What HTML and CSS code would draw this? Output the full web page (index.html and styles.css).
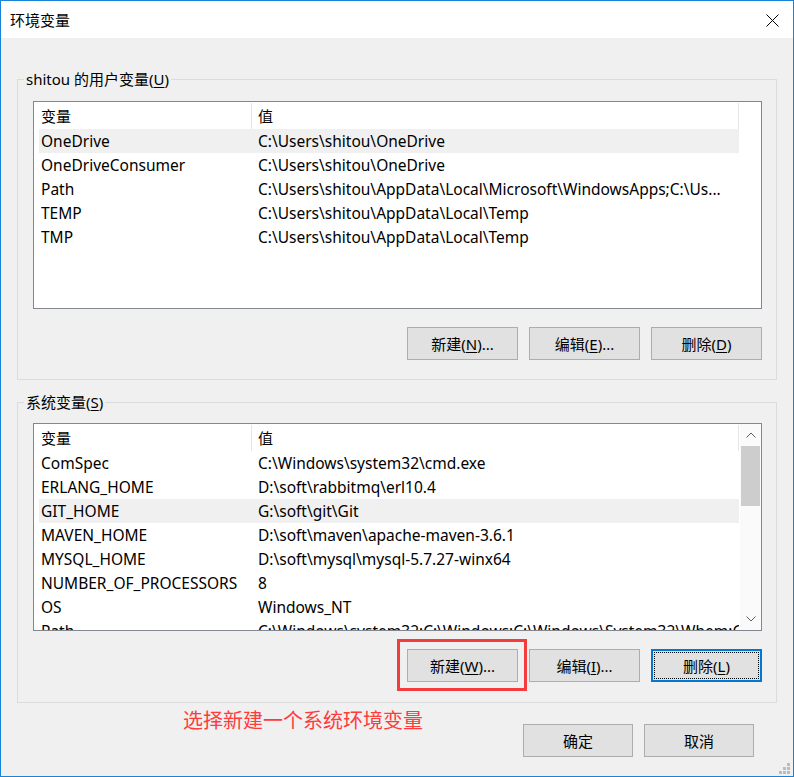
FILE: index.html
```html
<!DOCTYPE html>
<html lang="zh-CN">
<head>
    <meta charset="UTF-8">
    <title>环境变量</title>
    <link rel="stylesheet" href="styles.css">
</head>
<body>
<div class="window">
    <div class="titlebar">
        <span class="title">环境变量</span>
        <svg class="close" width="13" height="13" viewBox="0 0 13 13">
            <path d="M0.5 0.5 L12.5 12.5 M12.5 0.5 L0.5 12.5" stroke="#000" stroke-width="1" fill="none"/>
        </svg>
    </div>

    <div class="content">
        <!-- 用户变量 -->
        <fieldset class="group group-user">
            <legend>shitou 的用户变量(<u>U</u>)</legend>
            <div class="list">
                <div class="list-body">
                    <div class="list-head">
                        <div class="col-name">变量</div>
                        <div class="col-value">值</div>
                    </div>
                    <div class="row selected"><span>OneDrive</span><span>C:\Users\shitou\OneDrive</span></div>
                    <div class="row"><span>OneDriveConsumer</span><span>C:\Users\shitou\OneDrive</span></div>
                    <div class="row"><span>Path</span><span>C:\Users\shitou\AppData\Local\Microsoft\WindowsApps;C:\Us...</span></div>
                    <div class="row"><span>TEMP</span><span>C:\Users\shitou\AppData\Local\Temp</span></div>
                    <div class="row"><span>TMP</span><span>C:\Users\shitou\AppData\Local\Temp</span></div>
                </div>
            </div>
            <div class="btn-row">
                <button class="btn">新建(<u>N</u>)...</button>
                <button class="btn">编辑(<u>E</u>)...</button>
                <button class="btn">删除(<u>D</u>)</button>
            </div>
        </fieldset>

        <!-- 系统变量 -->
        <fieldset class="group group-system">
            <legend>系统变量(<u>S</u>)</legend>
            <div class="list">
                <div class="list-body">
                    <div class="list-head">
                        <div class="col-name">变量</div>
                        <div class="col-value">值</div>
                    </div>
                    <div class="row"><span>ComSpec</span><span>C:\Windows\system32\cmd.exe</span></div>
                    <div class="row"><span>ERLANG_HOME</span><span>D:\soft\rabbitmq\erl10.4</span></div>
                    <div class="row selected"><span>GIT_HOME</span><span>G:\soft\git\Git</span></div>
                    <div class="row"><span>MAVEN_HOME</span><span>D:\soft\maven\apache-maven-3.6.1</span></div>
                    <div class="row"><span>MYSQL_HOME</span><span>D:\soft\mysql\mysql-5.7.27-winx64</span></div>
                    <div class="row"><span>NUMBER_OF_PROCESSORS</span><span>8</span></div>
                    <div class="row"><span>OS</span><span>Windows_NT</span></div>
                    <div class="row"><span>Path</span><span>C:\Windows\system32;C:\Windows;C:\Windows\System32\Wbem;C:\Wi</span></div>
                </div>
                <div class="scrollbar">
                    <div class="arrow">
                        <svg width="10" height="6" viewBox="0 0 10 6"><path d="M0.5 5.5 L5 1 L9.5 5.5" stroke="#606060" fill="none"/></svg>
                    </div>
                    <div class="track"><div class="thumb"></div></div>
                    <div class="arrow">
                        <svg width="10" height="6" viewBox="0 0 10 6"><path d="M0.5 0.5 L5 5 L9.5 0.5" stroke="#606060" fill="none"/></svg>
                    </div>
                </div>
            </div>
            <div class="btn-row">
                <button class="btn marked">新建(<u>W</u>)...</button>
                <button class="btn">编辑(<u>I</u>)...</button>
                <button class="btn focused">删除(<u>L</u>)</button>
            </div>
        </fieldset>

        <div class="footer">
            <div class="note">选择新建一个系统环境变量</div>
            <div class="footer-btns">
                <button class="btn">确定</button>
                <button class="btn">取消</button>
            </div>
        </div>
    </div>

    <svg class="grip" width="11" height="11" viewBox="0 0 11 11">
        <rect x="8" y="0" width="3" height="3" fill="#bcbcbc"/>
        <rect x="4" y="4" width="3" height="3" fill="#bcbcbc"/>
        <rect x="8" y="4" width="3" height="3" fill="#bcbcbc"/>
        <rect x="0" y="8" width="3" height="3" fill="#bcbcbc"/>
        <rect x="4" y="8" width="3" height="3" fill="#bcbcbc"/>
        <rect x="8" y="8" width="3" height="3" fill="#bcbcbc"/>
    </svg>
</div>
</body>
</html>
```

FILE: styles.css
```css
:root {
    --border-blue: #1883d7;
    --panel-bg: #f0f0f0;
    --group-line: #dcdcdc;
    --list-line: #828790;
}

* {
    box-sizing: border-box;
}

body {
    margin: 0;
    font-family: 'Noto Sans', 'Noto Sans CJK SC', sans-serif;
    font-size: 15px;
    color: #000;
    background: var(--panel-bg);
}

u {
    text-decoration-thickness: 1px;
    text-underline-offset: 2px;
}

.window {
    position: relative;
    width: 794px;
    height: 777px;
    border: 1px solid var(--border-blue);
    background: var(--panel-bg);
    display: flex;
    flex-direction: column;
}

.titlebar {
    height: 37px;
    background: #fff;
    display: flex;
    align-items: center;
    justify-content: space-between;
    padding: 0 14px 0 9px;
}

.title {
    line-height: 20px;
}

.close {
    display: block;
    margin-top: 1px;
}

.content {
    flex: 1;
    padding: 31px 16px 0 16px;
    display: flex;
    flex-direction: column;
}

.group {
    margin: 0;
    border: 1px solid var(--group-line);
    padding: 12px 14px 19px 15px;
    min-width: 0;
}

.group-system {
    margin-top: 12px;
    padding-top: 11px;
    padding-bottom: 20px;
}

.group legend {
    line-height: 20px;
    padding: 0 2px;
    margin-left: -9px;
}

.list {
    height: 208px;
    border: 1px solid var(--list-line);
    background: #fff;
    display: flex;
    overflow: hidden;
}

.list-body {
    flex: 1;
    min-width: 0;
}

.list-head {
    width: 705px;
    height: 27px;
    padding-left: 7px;
    display: grid;
    grid-template-columns: 211px 1fr;
    line-height: 27px;
}

.list-head div {
    border-right: 1px solid #e5e5e5;
    margin: 1px 0;
    line-height: 25px;
    padding-top: 1px;
}

.list-head .col-value {
    padding-left: 6px;
}

.row {
    width: 700px;
    height: 24px;
    margin-left: 5px;
    padding-left: 2px;
    display: grid;
    grid-template-columns: 217px 1fr;
    font-size: 15.5px;
    line-height: 24px;
    white-space: nowrap;
}

.row span {
    overflow: hidden;
}

.row.selected {
    background: #f0f0f0;
}

.scrollbar {
    width: 21px;
    background: #fafafa;
    display: flex;
    flex-direction: column;
}

.arrow {
    height: 22px;
    display: flex;
    align-items: center;
    justify-content: center;
}

.arrow svg {
    display: block;
}

.track {
    flex: 1;
}

.thumb {
    height: 60px;
    margin: 0 1px;
    background: #cdcdcd;
}

.btn-row {
    display: flex;
    justify-content: flex-end;
    gap: 11px;
    margin-top: 18px;
}

.btn {
    position: relative;
    width: 111px;
    height: 33px;
    border: 1px solid #adadad;
    background: #e1e1e1;
    font-family: inherit;
    font-size: 15px;
    color: #000;
    padding: 0;
}

.btn.focused {
    border-color: #0078d7;
    box-shadow: inset 0 0 0 1px #0078d7;
    outline: 1px dotted #000;
    outline-offset: -4px;
}

/* 红色标注框 */
.btn.marked::after {
    content: "";
    position: absolute;
    top: -11px;
    left: -11px;
    right: -10px;
    bottom: -10px;
    border: 3px solid #f43c3c;
}

.footer {
    display: flex;
    align-items: flex-start;
    padding-right: 23px;
}

.note {
    margin: 7px 0 0 166px;
    font-size: 20px;
    line-height: 20px;
    color: #ff3b3b;
    font-family: 'Noto Sans CJK SC', sans-serif;
}

.footer-btns {
    margin-left: auto;
    margin-top: 21px;
    display: flex;
    gap: 11px;
}

.footer-btns .btn {
    width: 110px;
}

.grip {
    position: absolute;
    right: 3px;
    bottom: 2px;
}
```
